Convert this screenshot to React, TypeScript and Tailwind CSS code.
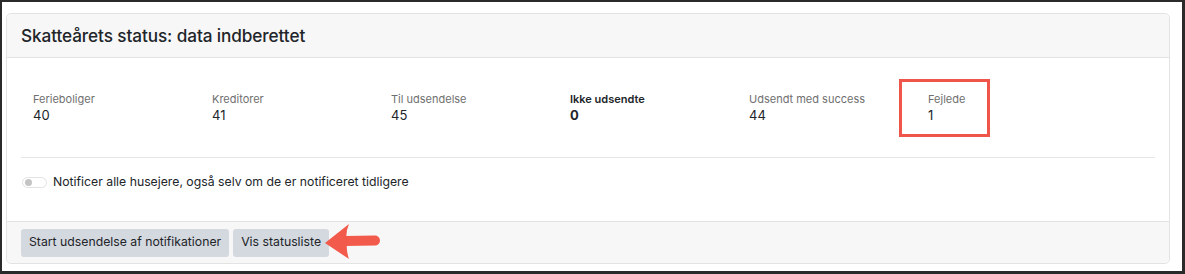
import React from "react";

const stats = [
  { label: "Ferieboliger", value: "40" },
  { label: "Kreditorer", value: "41" },
  { label: "Til udsendelse", value: "45" },
  { label: "Ikke udsendte", value: "0", bold: true },
  { label: "Udsendt med success", value: "44" },
  { label: "Fejlede", value: "1" },
];

export default function App() {
  return (
    <div
      className="w-[1185px] h-[274px] bg-white border-l-2 border-t-2 border-r-[3px] border-b-[3px] border-[#2a2a2a] pl-[4px] pt-[11px] pr-[12px] pb-[6px] text-[#212529]"
      style={{ fontFamily: 'Inter, "Noto Sans", "Liberation Sans", sans-serif' }}
    >
      <div className="h-[251px] w-[1164px] border border-[#e3e3e3] rounded-[5px] flex flex-col overflow-visible">
        <div className="h-[44px] shrink-0 bg-[#f7f7f7] border-b border-[#e3e3e3] rounded-t-[5px] px-[14px] flex items-center">
          <h1 className="text-[17.2px] font-medium tracking-[-0.1px]">Skatteårets status: data indberettet</h1>
        </div>
        <div className="flex-1 px-[14px] pt-[34px]">
          <div className="relative flex pl-[12px]">
            {stats.map((s) => (
              <div key={s.label} className="w-[179px] shrink-0 flex flex-col">
                <span
                  className={`text-[11px] leading-[14px] ${s.bold ? "font-semibold text-[#212529]" : "text-[#6f6f6f]"}`}
                >
                  {s.label}
                </span>
                <span className={`text-[13px] leading-[18px] ${s.bold ? "font-bold" : ""}`}>{s.value}</span>
              </div>
            ))}
            <div className="absolute left-[878px] top-[-13px] w-[91px] h-[58px] border-[3px] border-[#f0554a] pointer-events-none" />
          </div>
          <div className="mt-[33px] border-t border-[#e6e6e6]" />
          <div className="mt-[14px] flex items-center h-[20px]">
            <div className="w-[25px] h-[11px] rounded-full border border-[#e2e2e2] bg-white flex items-center pl-[2px] ml-[1px]">
              <div className="w-[7px] h-[7px] rounded-full bg-[#c4c4c4]" />
            </div>
            <span className="ml-[6px] text-[12.25px]">Notificer alle husejere, også selv om de er notificeret tidligere</span>
          </div>
        </div>
        <div className="relative h-[42px] shrink-0 bg-[#f7f7f7] border-t border-[#e3e3e3] rounded-b-[5px] px-[14px] flex items-center gap-[4px]">
          <button className="h-[28px] px-[8px] rounded-[3px] bg-[#d4d8df] text-[12.25px] text-[#212529]">
            Start udsendelse af notifikationer
          </button>
          <button className="h-[28px] px-[8px] rounded-[3px] bg-[#d4d8df] text-[12.25px] text-[#212529]">
            Vis statusliste
          </button>
          <svg
            className="absolute left-[312px] top-[1px]"
            width="70"
            height="40"
            viewBox="0 0 70 40"
          >
            <path d="M 26 18 L 56 17.5" stroke="#f25a4b" strokeWidth="10" strokeLinecap="round" fill="none" />
            <path d="M 6 20 L 30 1 Q 26 10 28 19 Q 27 28 30 36 Z" fill="#f25a4b" />
          </svg>
        </div>
      </div>
    </div>
  );
}
